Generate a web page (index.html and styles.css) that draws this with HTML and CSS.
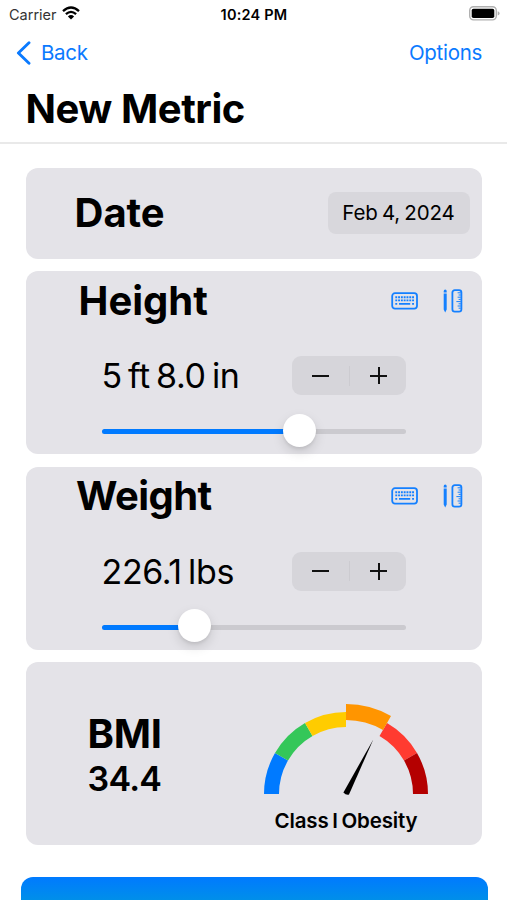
FILE: index.html
```html
<!DOCTYPE html>
<html lang="en">
<head>
    <meta charset="UTF-8">
    <meta name="viewport" content="width=device-width, initial-scale=1.0">
    <link rel="stylesheet" href="styles.css">
    <title>New Metric</title>
</head>
<body>
    <svg class="sprites">
        <symbol id="keyboard" viewBox="0 0 28 18">
            <rect x="1.2" y="1.2" width="24.8" height="15.4" rx="2.8" fill="none" stroke="currentColor" stroke-width="1.8"/>
            <path d="M4.3 5.2H23M4.3 8.4H23" stroke="currentColor" stroke-width="1.9" stroke-dasharray="1.9 0.9" fill="none"/>
            <path d="M4.3 11.9H6.2M8 11.9H19.2M21.1 11.9H23" stroke="currentColor" stroke-width="1.7" fill="none"/>
        </symbol>
        <symbol id="ruler" viewBox="0 0 20 24">
            <path d="M0.7 2.2Q0.7 0.6 2.2 0.6T3.7 2.2V3.4H0.7ZM0.7 4.4H3.7V20.5L2.2 23.4L0.7 20.5Z" fill="currentColor"/>
            <rect x="9.4" y="1.1" width="9" height="21.6" rx="2.4" fill="none" stroke="currentColor" stroke-width="1.8"/>
            <path d="M17.8 3.8H14.6M17.8 6H15.6M17.8 8.2H14.6M17.8 10.4H15.6M17.8 12.6H13.4M17.8 14.8H15.6M17.8 17H14.6M17.8 19.2H15.6" stroke="currentColor" stroke-width="1" fill="none"/>
        </symbol>
    </svg>
    <header>
        <div class="status">
            <div class="carrier">
                <span>Carrier</span>
                <svg class="wifi" width="18" height="14" viewBox="0 0 18 14">
                    <path d="M1 5.1Q9 -2.2 17 5.1M3.9 8.2Q9 3.6 14.1 8.2" fill="none" stroke="#000" stroke-width="2.3"/>
                    <path d="M5.9 10.4Q9 7.8 12.1 10.4L9 13.6Z"/>
                </svg>
            </div>
            <span class="time">10:24 PM</span>
            <svg class="battery" width="31" height="15" viewBox="0 0 31 15">
                <rect x="0.7" y="0.7" width="26.6" height="13.2" rx="3.8" fill="#fff" stroke="#b0b0b0" stroke-width="1.4"/>
                <rect x="2.7" y="2.7" width="22.6" height="9.4" rx="1.8"/>
                <path d="M28.7 5.2Q30.6 5.8 30.6 7.4T28.7 9.6Z" fill="#b0b0b0"/>
            </svg>
        </div>
        <nav>
            <a class="back">
                <svg width="15" height="24" viewBox="0 0 15 24"><path d="M13 1.8L2.4 12L13 22.2" fill="none" stroke="currentColor" stroke-width="2.9" stroke-linecap="round" stroke-linejoin="round"/></svg>
                <span>Back</span>
            </a>
            <a class="options">Options</a>
        </nav>
        <h1>New Metric</h1>
    </header>
    <main>
        <section class="card date">
            <h2>Date</h2>
            <span class="picker">Feb 4, 2024</span>
        </section>
        <section class="card metric">
            <div class="top">
                <h2 class="height">Height</h2>
                <svg class="keyboard"><use href="#keyboard"/></svg>
                <svg class="ruler"><use href="#ruler"/></svg>
            </div>
            <div class="row">
                <span class="value">5 ft 8.0 in</span>
                <div class="stepper"><i class="minus"></i><i class="line"></i><i class="plus"></i></div>
            </div>
            <div class="slider">
                <div class="fill" style="width: 65.1%"></div>
                <div class="knob"></div>
            </div>
        </section>
        <section class="card metric">
            <div class="top">
                <h2 class="weight">Weight</h2>
                <svg class="keyboard"><use href="#keyboard"/></svg>
                <svg class="ruler"><use href="#ruler"/></svg>
            </div>
            <div class="row">
                <span class="value">226.1 lbs</span>
                <div class="stepper"><i class="minus"></i><i class="line"></i><i class="plus"></i></div>
            </div>
            <div class="slider">
                <div class="fill" style="width: 30.6%"></div>
                <div class="knob"></div>
            </div>
        </section>
        <section class="card bmi">
            <div class="result">
                <h2>BMI</h2>
                <p>34.4</p>
            </div>
            <div class="gauge">
                <svg width="166" height="94" viewBox="-83 -91 166 94">
                    <path fill="#007aff" d="M-82 0A82 82 0 0 1 -71 -41L-58 -33.5A67 67 0 0 0 -67 0Z"/>
                    <path fill="#34c759" d="M-71 -41A82 82 0 0 1 -41 -71L-33.5 -58A67 67 0 0 0 -58 -33.5Z"/>
                    <path fill="#ffcc00" d="M-41 -71A82 82 0 0 1 0 -82V-67A67 67 0 0 0 -33.5 -58Z"/>
                    <path fill="#ff3b30" d="M41 -71A82 82 0 0 1 71 -41L58 -33.5A67 67 0 0 0 33.5 -58Z"/>
                    <path fill="#b40000" d="M71 -41A82 82 0 0 1 82 0H67A67 67 0 0 0 58 -33.5Z"/>
                    <path fill="#ff9500" d="M0 -90A90 90 0 0 1 45 -78L37 -64A74 74 0 0 0 0 -74Z"/>
                    <path d="M27.3 -54.6L3 0.6Q0 1.4 -2.6 -1.6Z"/>
                </svg>
                <p>Class I Obesity</p>
            </div>
        </section>
    </main>
    <div class="save"></div>
</body>
</html>
```
FILE: styles.css
```css
*{
    padding: 0;
    margin: 0;
    box-sizing: border-box;
}
html,body{
    width: 100%;
    height: 100%;
    overflow: hidden;
}
body{
    font-family: Inter, "Liberation Sans", sans-serif;
    color: #000;
    background-color: #fff;
}
svg{
    display: block;
}
.sprites{
    display: none;
}
header{
    height: 143.5px;
    border-bottom: 2px solid #e9e9e9;
}
.status{
    height: 28px;
    padding: 0 7px 0 9px;
    display: grid;
    grid-template-columns: 1fr auto 1fr;
    align-items: center;
    font-size: 14.5px;
}
.carrier{
    display: flex;
    align-items: center;
    gap: 6px;
    color: #333;
}
.wifi{
    margin: -2px 0 0 -1px;
}
.time{
    font-weight: 600;
    font-size: 14.5px;
    letter-spacing: 0.2px;
    margin-right: 1px;
}
.battery{
    justify-self: end;
    margin-top: -1px;
}
nav{
    height: 49px;
    padding: 0 25px 0 16px;
    display: flex;
    align-items: center;
    justify-content: space-between;
    color: #0a7aff;
    font-size: 20.5px;
    letter-spacing: -0.3px;
}
.back{
    display: flex;
    align-items: center;
    gap: 10px;
}
h1{
    padding-left: 25.5px;
    font-size: 40px;
    line-height: 64px;
    font-weight: 700;
    letter-spacing: -0.45px;
}
main{
    padding: 24px 25px 0 25.5px;
    display: flex;
    flex-direction: column;
    gap: 12.5px;
}
.card{
    background-color: #e4e3e8;
    border-radius: 12px;
    height: 183px;
}
h2{
    font-size: 40px;
    line-height: 50px;
    font-weight: 700;
}
.date{
    height: 91px;
    padding: 0 12.5px 0 49px;
    display: flex;
    align-items: center;
    justify-content: space-between;
}
.picker{
    width: 142px;
    height: 42px;
    line-height: 42px;
    border-radius: 8px;
    background-color: #d8d7dc;
    text-align: center;
    font-size: 20.5px;
    letter-spacing: -0.1px;
    word-spacing: -1.5px;
}
.top{
    height: 59px;
    padding-right: 19px;
    display: flex;
    align-items: center;
}
.top h2{
    margin-right: auto;
}
.height{
    padding-left: 53px;
}
.weight{
    padding-left: 50.5px;
    letter-spacing: -0.55px;
}
.top svg{
    color: #1480ff;
}
.keyboard{
    width: 28px;
    height: 18px;
}
.ruler{
    width: 20px;
    height: 24px;
    margin-left: 24.5px;
}
.row{
    height: 91px;
    padding: 0 76px;
    display: flex;
    align-items: center;
    justify-content: space-between;
}
.value{
    font-size: 34px;
    letter-spacing: -0.35px;
    word-spacing: -3px;
}
.stepper{
    width: 114px;
    height: 39px;
    border-radius: 9px;
    background-color: #d6d5da;
    display: grid;
    grid-template-columns: 1fr 1px 1fr;
    align-items: center;
    justify-items: center;
}
.line{
    width: 1px;
    height: 20px;
    background-color: #cccbd0;
}
.minus,.plus{
    width: 17px;
    height: 17px;
    background: linear-gradient(#111,#111) center / 17px 2px no-repeat;
}
.plus{
    margin-left: 2px;
    background: linear-gradient(#111,#111) center / 17px 2px no-repeat, linear-gradient(#111,#111) center / 2px 17px no-repeat;
}
.slider{
    margin: 8px 76px 0;
    height: 5px;
    border-radius: 3px;
    background-color: #cbcacf;
    display: flex;
    align-items: center;
}
.fill{
    height: 5px;
    border-radius: 3px;
    background-color: #007aff;
}
.knob{
    width: 33px;
    height: 33px;
    flex: none;
    margin: -3px 0 0 -16.5px;
    border-radius: 50%;
    background-color: #fff;
    box-shadow: 0 5px 12px rgba(0,0,0,0.13), 0 2px 3px rgba(0,0,0,0.07);
}
.bmi{
    padding: 0 53px 0 62px;
    display: flex;
    justify-content: space-between;
}
.result{
    padding-top: 47px;
}
.result h2{
    letter-spacing: -0.3px;
}
.result p{
    font-size: 34px;
    line-height: 40px;
    font-weight: 600;
    letter-spacing: -0.7px;
}
.gauge{
    padding-top: 41px;
    text-align: center;
}
.gauge p{
    font-size: 20.5px;
    line-height: 25px;
    margin-top: 11px;
    font-weight: 600;
    white-space: nowrap;
    letter-spacing: -0.15px;
    word-spacing: -1.3px;
}
.save{
    margin: 31.5px 19.5px 0 20.5px;
    height: 60px;
    border-radius: 12px;
    background: linear-gradient(#007aff, #0090e8 24px, #00a0d8);
}
```
